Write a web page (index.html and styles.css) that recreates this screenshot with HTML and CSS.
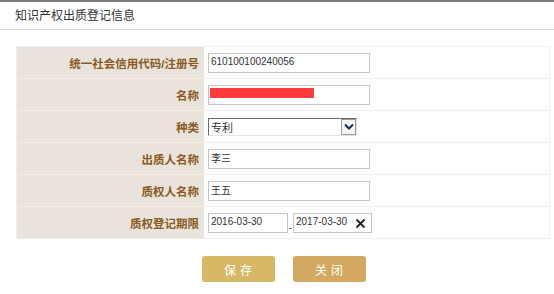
FILE: index.html
```html
<!DOCTYPE html>
<html lang="zh-CN">
<head>
    <meta charset="UTF-8">
    <title>知识产权出质登记信息</title>
    <link rel="stylesheet" href="styles.css">
</head>
<body>

<div class="title">知识产权出质登记信息</div>

<div class="content">
    <table class="form-table">
        <tr>
            <th>统一社会信用代码/注册号</th>
            <td><input type="text" class="txt" value="610100100240056"></td>
        </tr>
        <tr>
            <th>名称</th>
            <td><span class="txt-wrap"><input type="text" class="txt" value=""><span class="mask"></span></span></td>
        </tr>
        <tr>
            <th>种类</th>
            <td>
                <div class="sel">
                    <span class="sel-text">专利</span>
                    <span class="sel-btn">
                        <svg width="10" height="7" viewBox="0 0 10 7"><path d="M1 1.5 L5 5.5 L9 1.5" fill="none" stroke="#1a2a4a" stroke-width="2"/></svg>
                    </span>
                </div>
            </td>
        </tr>
        <tr>
            <th>出质人名称</th>
            <td><input type="text" class="txt" value="李三"></td>
        </tr>
        <tr>
            <th>质权人名称</th>
            <td><input type="text" class="txt" value="王五"></td>
        </tr>
        <tr>
            <th>质权登记期限</th>
            <td>
                <div class="dates">
                    <input type="text" class="txt date" value="2016-03-30">
                    <span class="dash">-</span>
                    <span class="txt-wrap">
                        <input type="text" class="txt date" value="2017-03-30">
                        <svg class="clear" width="11" height="11" viewBox="0 0 11 11"><path d="M1.5 1.5 L9.5 9.5 M9.5 1.5 L1.5 9.5" stroke="#222" stroke-width="1.8"/></svg>
                    </span>
                </div>
            </td>
        </tr>
    </table>
</div>

<div class="buttons">
    <button class="btn btn-save">保存</button>
    <button class="btn btn-close">关闭</button>
</div>

</body>
</html>
```

FILE: styles.css
```css
body {
    margin: 0;
    font-family: "Liberation Sans", "Noto Sans CJK SC", sans-serif;
    font-size: 12px;
    color: #333;
    background-color: #fff;
    border-top: 2px solid #7a7a7a;
}

.title {
    height: 27px;
    line-height: 29px;
    padding-left: 15px;
    font-size: 12px;
    color: #333;
    border-bottom: 1px solid #d8d8d8;
}

.content {
    padding: 16px 4px 0 16px;
}

.form-table {
    width: 100%;
    border-collapse: collapse;
    border: 1px solid #f0f0f0;
}

.form-table th,
.form-table td {
    height: 31px;
    padding: 0;
    border-bottom: 1px solid #f0ede9;
}

.form-table th {
    width: 182px;
    padding-right: 5px;
    text-align: right;
    font-weight: bold;
    font-size: 11.5px;
    color: #8a5a22;
    background-color: #e9e3dc;
}

.form-table td {
    padding-left: 4px;
}

.txt {
    box-sizing: border-box;
    width: 162px;
    height: 20px;
    margin: 0;
    padding: 0 2px 3px;
    font-family: "Liberation Sans", "Noto Sans CJK SC", sans-serif;
    font-size: 10px;
    color: #333;
    border: 1px solid #c4c4c4;
    background: #fff;
    vertical-align: middle;
}

.txt-wrap {
    position: relative;
    display: inline-block;
    vertical-align: middle;
}

.txt-wrap .txt {
    display: block;
}

.mask {
    position: absolute;
    left: 2px;
    top: 3px;
    width: 104px;
    height: 10px;
    background-color: #ff3b3b;
}

.sel {
    box-sizing: border-box;
    display: flex;
    align-items: center;
    width: 149px;
    height: 18px;
    border: 1px solid #8a8a8a;
    border-top-color: #6a6a6a;
    border-left-color: #6a6a6a;
    border-right-color: #e4e4e4;
    border-bottom-color: #e4e4e4;
    background: #fff;
}

.sel-text {
    flex: 1;
    padding-left: 2px;
    font-size: 11px;
    color: #333;
}

.sel-btn {
    box-sizing: border-box;
    display: flex;
    align-items: center;
    justify-content: center;
    width: 15px;
    height: 16px;
    border: 1px solid #9a9a9a;
    background: #f4f4f4;
}

.dates {
    display: flex;
    align-items: center;
}

.txt.date {
    width: 80px;
}

.dates .txt-wrap .txt {
    width: 79px;
}

.dash {
    width: 5px;
    padding-top: 10px;
    font-size: 10px;
    color: #555;
    text-align: center;
}

.clear {
    position: absolute;
    right: 6px;
    top: 5px;
}

.buttons {
    display: flex;
    justify-content: center;
    gap: 18px;
    padding: 17px 0 0 13px;
}

.btn {
    width: 73px;
    height: 26px;
    padding: 0;
    border: none;
    border-radius: 3px;
    font-family: "Noto Sans CJK SC", sans-serif;
    font-size: 12px;
    letter-spacing: 4px;
    text-indent: 4px;
    color: #fff;
}

.btn-save {
    background-color: #d6b865;
}

.btn-close {
    background-color: #d3a962;
}
```
